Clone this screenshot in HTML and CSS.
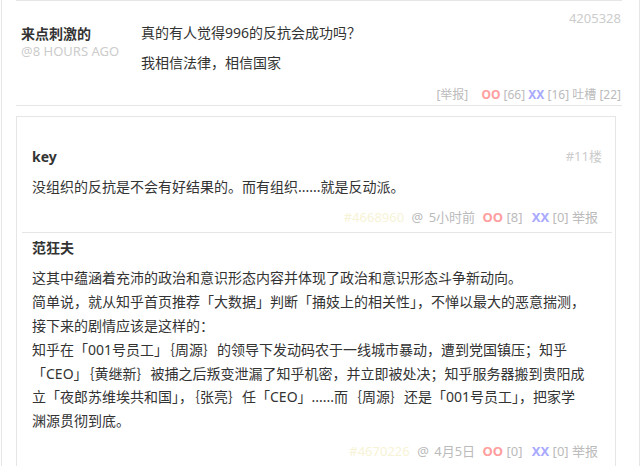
FILE: index.html
```html
<!DOCTYPE html>
<html lang="zh-CN">
  <head>
    <meta charset="UTF-8" />
    <meta name="viewport" content="width=device-width, initial-scale=1.0" />
    <title>吐槽</title>
    <link rel="stylesheet" href="styles.css">
  </head>
  <body>
    <div class="page">
      <!-- Main comment -->
      <div class="comment">
        <div class="comment-id">4205328</div>
        <div class="comment-main">
          <div class="author">
            <div class="author-name">来点刺激的</div>
            <div class="author-time">@8 HOURS AGO</div>
          </div>
          <div class="comment-text">
            <p>真的有人觉得996的反抗会成功吗？</p>
            <p>我相信法律，相信国家</p>
          </div>
        </div>
        <div class="comment-foot">
          <span class="report">[举报]</span>
          <span class="oo">OO</span> [66]
          <span class="xx">XX</span> [16] 吐槽 [22]
        </div>
      </div>

      <!-- Tucao replies -->
      <div class="tucao">
        <div class="reply">
          <div class="reply-head">
            <span class="floor">#11楼</span>
            <span class="reply-name">key</span>
          </div>
          <div class="reply-text">没组织的反抗是不会有好结果的。而有组织......就是反动派。</div>
          <div class="reply-foot">
            <span class="hash">#4668960</span>
            <span class="at">@</span>
            <span class="when">5小时前</span>
            <span class="oo">OO</span> [8]
            <span class="xx">XX</span> [0] 举报
          </div>
        </div>

        <div class="reply">
          <div class="reply-head">
            <span class="reply-name">范狂夫</span>
          </div>
          <div class="reply-text">
            这其中蕴涵着充沛的政治和意识形态内容并体现了政治和意识形态斗争新动向。<br>
            简单说，就从知乎首页推荐「大数据」判断「捅妓上的相关性」，不惮以最大的恶意揣测，<br>
            接下来的剧情应该是这样的：<br>
            知乎在「001号员工」｛周源｝的领导下发动码农于一线城市暴动，遭到党国镇压；知乎<br>
            「CEO」｛黄继新｝被捕之后叛变泄漏了知乎机密，并立即被处决；知乎服务器搬到贵阳成<br>
            立「夜郎苏维埃共和国」，｛张亮｝任「CEO」......而｛周源｝还是「001号员工」，把家学<br>
            渊源贯彻到底。
          </div>
          <div class="reply-foot">
            <span class="hash">#4670226</span>
            <span class="at">@</span>
            <span class="when">4月5日</span>
            <span class="oo">OO</span> [0]
            <span class="xx">XX</span> [0] 举报
          </div>
        </div>
      </div>
    </div>
  </body>
</html>
```

FILE: styles.css
```css
* {
  margin: 0;
  padding: 0;
  box-sizing: border-box;
}

body {
  font-family: "Noto Sans", "Noto Sans CJK SC", sans-serif;
  color: #333;
  background-color: #fff;
}

.page {
  margin: 0 1px;
  min-height: 466px;
  border-left: 1px solid #e6e6e6;
  border-right: 1px solid #e6e6e6;
  overflow: hidden;
}

/* main comment */
.comment {
  margin: 0 17px 0 14px;
  padding: 0 1px 2px 5px;
  border-top: 1px solid #e6e6e6;
  border-bottom: 1px solid #e6e6e6;
}

.comment-id {
  padding-top: 9px;
  font-size: 13px;
  line-height: 16px;
  color: #ccc;
  text-align: right;
}

.comment-main {
  display: flex;
  margin-top: -3px;
}

.author {
  width: 120px;
  padding-top: 1px;
}

.author-name {
  font-size: 14px;
  font-weight: bold;
  line-height: 20px;
}

.author-time {
  font-size: 13px;
  line-height: 14px;
  color: #ccc;
}

.comment-text {
  flex: 1;
  font-size: 14px;
  line-height: 20px;
}

.comment-text p + p {
  margin-top: 10px;
}

.comment-foot {
  margin-top: 14px;
  font-size: 12px;
  line-height: 16px;
  color: #bbb;
  text-align: right;
}

.report {
  margin-right: 10px;
}

.oo {
  font-weight: bold;
  color: #ff9e9e;
}

.xx {
  font-weight: bold;
  color: #a9a9ff;
}

/* tucao box */
.tucao {
  margin: 10px 23px 0 14px;
  padding: 25px 3px 10px 5px;
  border: 1px solid #e6e6e6;
}

.reply {
  padding: 4px 10px 7px 10px;
  border-bottom: 1px solid #e6e6e6;
}

.reply-head {
  line-height: 20px;
}

.reply-name {
  font-size: 14px;
  font-weight: bold;
}

.floor {
  float: right;
  font-size: 13px;
  color: #ccc;
}

.reply-text {
  margin-top: 8px;
  font-size: 14px;
  line-height: 23.9px;
}

.reply-foot {
  margin-top: 10px;
  padding-right: 4px;
  font-size: 13px;
  line-height: 16px;
  color: #bbb;
  text-align: right;
}

.reply-foot .hash {
  color: #f7f3d6;
  margin-right: 4px;
}

.reply-foot .when {
  margin: 0 4px 0 2px;
}

.reply-foot .xx {
  margin-left: 6px;
}
```
